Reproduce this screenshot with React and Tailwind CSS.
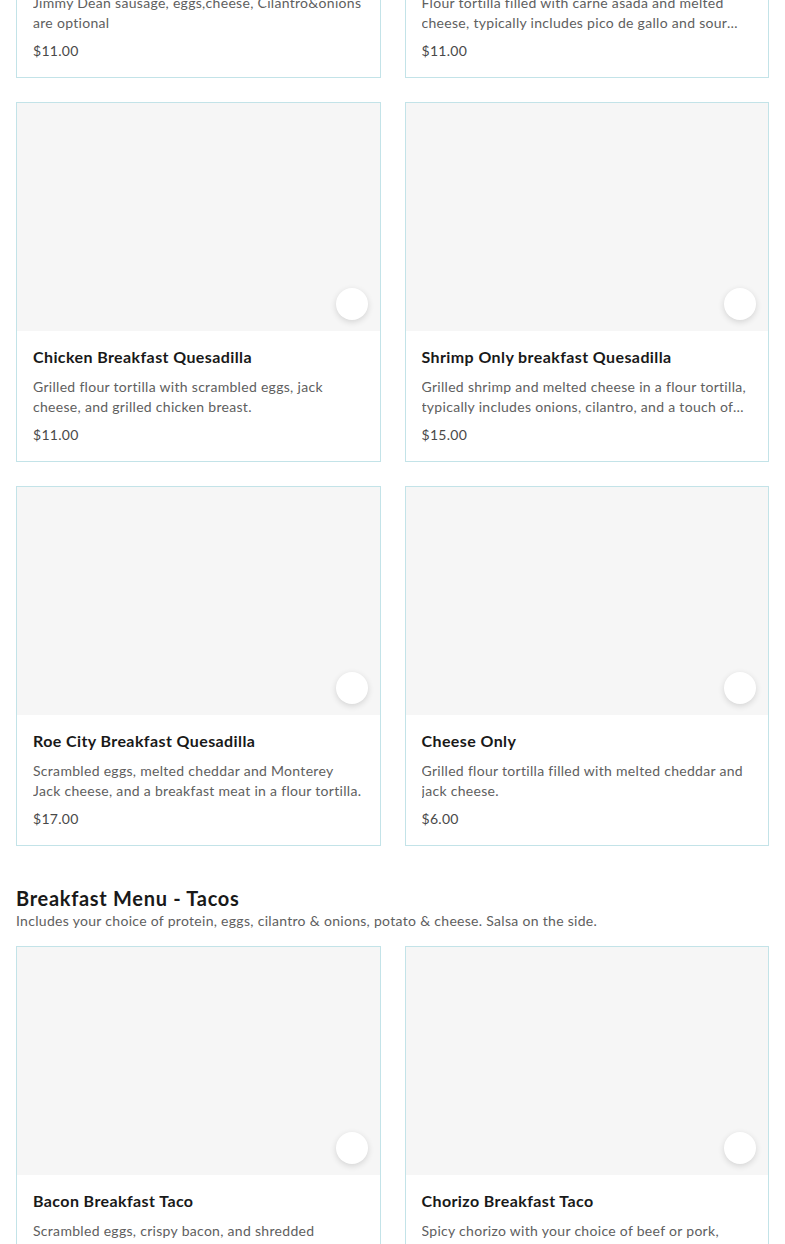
import React from "react";

const rows = [
  [
    {
      title: "Sausage Breakfast Quesadilla",
      desc: "Jimmy Dean sausage, eggs,cheese, Cilantro&onions are optional",
      price: "$11.00",
    },
    {
      title: "Carne Asada Breakfast Quesadilla",
      desc: "Flour tortilla filled with carne asada and melted cheese, typically includes pico de gallo and sour cream.",
      price: "$11.00",
    },
  ],
  [
    {
      title: "Chicken Breakfast Quesadilla",
      desc: "Grilled flour tortilla with scrambled eggs, jack cheese, and grilled chicken breast.",
      price: "$11.00",
    },
    {
      title: "Shrimp Only breakfast Quesadilla",
      desc: "Grilled shrimp and melted cheese in a flour tortilla, typically includes onions, cilantro, and a touch of salsa.",
      price: "$15.00",
    },
  ],
  [
    {
      title: "Roe City Breakfast Quesadilla",
      desc: "Scrambled eggs, melted cheddar and Monterey Jack cheese, and a breakfast meat in a flour tortilla.",
      price: "$17.00",
    },
    {
      title: "Cheese Only",
      desc: "Grilled flour tortilla filled with melted cheddar and jack cheese.",
      price: "$6.00",
    },
  ],
];

const tacos = [
  {
    title: "Bacon Breakfast Taco",
    desc: ["Scrambled eggs, crispy bacon, and shredded", "cheese on a flour tortilla."],
    price: "$5.00",
  },
  {
    title: "Chorizo Breakfast Taco",
    desc: "Spicy chorizo with your choice of beef or pork, scrambled eggs and cheese on a flour tortilla.",
    price: "$5.00",
  },
];

function Card({ item }) {
  const desc = Array.isArray(item.desc) ? (
    <>
      {item.desc[0]}
      <br />
      {item.desc[1]}
    </>
  ) : (
    item.desc
  );
  return (
    <div className="border border-[#c3e3e8] bg-white flex flex-col">
      <div className="h-[228px] bg-[#f6f6f6] flex items-end justify-end pr-3 pb-[11px]">
        <div className="w-8 h-8 rounded-full bg-white shadow-[0_2px_6px_rgba(0,0,0,0.14)]" />
      </div>
      <div className="px-4 pt-[14px] pb-4 flex flex-col">
        <div className="text-[16px] leading-6 font-bold text-[#191919] tracking-[0.4px]">
          {item.title}
        </div>
        <div className="mt-2 text-[14px] leading-5 text-[#606060] tracking-[0.3px] line-clamp-2">
          {desc}
        </div>
        <div className="mt-2 text-[14px] leading-5 text-[#494949] tracking-[0.3px]">
          {item.price}
        </div>
      </div>
    </div>
  );
}

export default function App() {
  return (
    <div
      className="bg-white h-[1244px] overflow-hidden"
      style={{ fontFamily: "Lato, 'Noto Sans', sans-serif" }}
    >
      <div className="px-4 -mt-[282px] flex flex-col">
        <div className="flex flex-col gap-6">
          {rows.map((row, i) => (
            <div key={i} className="grid grid-cols-2 gap-6">
              {row.map((item, j) => (
                <Card key={j} item={item} />
              ))}
            </div>
          ))}
        </div>
        <div className="mt-10">
          <h2 className="text-[20px] leading-6 font-bold text-[#191919] tracking-[0.7px]">
            Breakfast Menu - Tacos
          </h2>
          <p className="mt-[1px] text-[14px] leading-5 text-[#606060] tracking-[0.3px]">
            Includes your choice of protein, eggs, cilantro &amp; onions, potato &amp; cheese. Salsa on the side.
          </p>
        </div>
        <div className="mt-[15px] grid grid-cols-2 gap-6">
          {tacos.map((item, j) => (
            <Card key={j} item={item} />
          ))}
        </div>
      </div>
    </div>
  );
}
